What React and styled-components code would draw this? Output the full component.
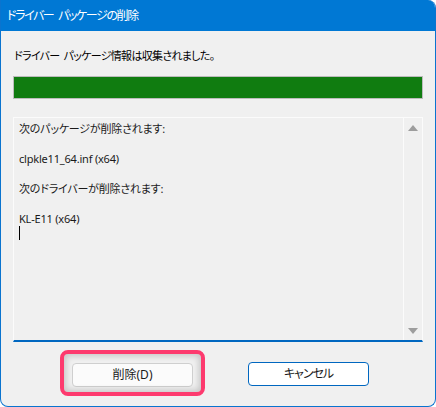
import React from 'react';
import styled, { createGlobalStyle } from 'styled-components';

const GlobalStyle = createGlobalStyle`
  html, body {
    margin: 0;
    padding: 0;
    background: #ffffff;
  }
  body {
    font-family: "Segoe UI", "Noto Sans", "Noto Sans CJK JP", sans-serif;
    font-feature-settings: "palt";
  }
`;

const Window = styled.div`
  width: 436px;
  height: 407px;
  box-sizing: border-box;
  border: 1px solid #0a74cf;
  border-top: none;
  border-radius: 0 8px 8px 8px;
  background: #f0f0f0;
  overflow: hidden;
  display: flex;
  flex-direction: column;
`;

const TitleBar = styled.div`
  height: 31px;
  flex-shrink: 0;
  background: #0078d4;
  color: #ffffff;
  font-size: 12px;
  letter-spacing: -1.4px;
  word-spacing: 3px;
  line-height: 31px;
  padding-left: 7px;
  margin: 0 -1px;
`;

const Body = styled.div`
  flex: 1;
  padding: 17px 12px 0 12px;
  display: flex;
  flex-direction: column;
`;

const Label = styled.div`
  font-size: 11px;
  letter-spacing: -0.7px;
  word-spacing: 2px;
  line-height: 16px;
  color: #000;
  padding-left: 1px;
`;

const Progress = styled.div`
  margin-top: 12px;
  height: 23px;
  box-sizing: border-box;
  border: 1px solid #bcbcbc;
  background: #e6e6e6;
`;

const ProgressFill = styled.div`
  height: 100%;
  background: #107c10;
`;

const LogBox = styled.div`
  margin-top: 18px;
  height: 225px;
  box-sizing: border-box;
  border: 1px solid #fbfbfb;
  border-bottom: 2px solid #0067c0;
  display: flex;
`;

const LogText = styled.div`
  flex: 1;
  padding: 3px 5px;
  font-size: 11px;
  letter-spacing: -0.2px;
  line-height: 15px;
  color: #1a1a1a;
`;

const Line = styled.div`
  height: 15px;
  white-space: pre;
`;

const Caret = styled.div`
  width: 1px;
  height: 14px;
  background: #000;
`;

const ScrollBar = styled.div`
  width: 18px;
  border-left: 1px solid #fbfbfb;
  display: flex;
  flex-direction: column;
  justify-content: space-between;
  align-items: center;
  padding: 7px 0 6px;
`;

const Arrow = styled.div`
  width: 0;
  height: 0;
  border-left: 5px solid transparent;
  border-right: 5px solid transparent;
  ${(p) => (p.$down
    ? 'border-top: 6px solid #9d9d9d;'
    : 'border-bottom: 6px solid #9d9d9d;')}
`;

const ButtonRow = styled.div`
  margin-top: 20px;
  display: flex;
  padding-left: 59px;
  gap: 55px;
`;

const Highlight = styled.div`
  position: relative;
`;

const HighlightFrame = styled.div`
  position: absolute;
  left: -12px;
  top: -12px;
  right: -12px;
  bottom: -9px;
  border: 4px solid #fd3a6e;
  border-radius: 8px;
  box-shadow: inset 0 0 6px 2px rgba(0, 0, 0, 0.18);
  pointer-events: none;
`;

const Button = styled.button`
  width: 121px;
  height: 24px;
  box-sizing: border-box;
  border: 1px solid ${(p) => (p.$primary ? '#0067c0' : '#cfcfcf')};
  border-radius: 4px;
  background: ${(p) => (p.$primary ? '#ffffff' : '#fbfbfb')};
  font-family: inherit;
  font-feature-settings: "palt";
  font-size: 12px;
  letter-spacing: ${(p) => (p.$primary ? '-1px' : '0')};
  color: #1a1a1a;
  padding: 0;
  line-height: 20px;
`;

export default function App() {
  return (
    <>
      <GlobalStyle />
      <Window>
        <TitleBar>ドライバー パッケージの削除</TitleBar>
        <Body>
          <Label>ドライバー パッケージ情報は収集されました。</Label>
          <Progress>
            <ProgressFill style={{ width: '100%' }} />
          </Progress>
          <LogBox>
            <LogText>
              <Line>次のパッケージが削除されます:</Line>
              <Line> </Line>
              <Line>clpkle11_64.inf (x64)</Line>
              <Line> </Line>
              <Line>次のドライバーが削除されます:</Line>
              <Line> </Line>
              <Line>KL-E11 (x64)</Line>
              <Caret />
            </LogText>
            <ScrollBar>
              <Arrow />
              <Arrow $down />
            </ScrollBar>
          </LogBox>
          <ButtonRow>
            <Highlight>
              <Button>削除(D)</Button>
              <HighlightFrame />
            </Highlight>
            <Button $primary>キャンセル</Button>
          </ButtonRow>
        </Body>
      </Window>
    </>
  );
}
